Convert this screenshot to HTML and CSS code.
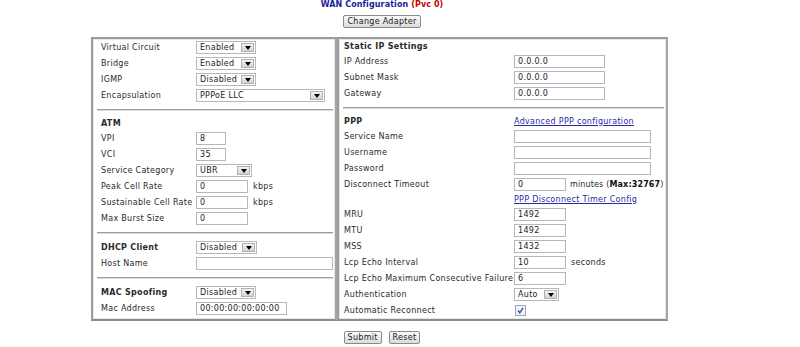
FILE: index.html
```html
<!DOCTYPE html>
<html lang="en">
<head>
  <meta charset="UTF-8" />
  <title>WAN Configuration</title>
  <link rel="stylesheet" href="styles.css">
</head>
<body>
  <div class="wrap">
    <div class="title">WAN Configuration <span class="pvc">(Pvc 0)</span></div>
    <div class="top-btn"><button class="btn">Change Adapter</button></div>

    <div class="panels">
      <div class="panel left">
        <div class="row"><span class="lbl">Virtual Circuit</span><span class="sel"><select class="w60"><option>Enabled</option></select></span></div>
        <div class="row"><span class="lbl">Bridge</span><span class="sel"><select class="w60"><option>Enabled</option></select></span></div>
        <div class="row"><span class="lbl">IGMP</span><span class="sel"><select class="w60"><option>Disabled</option></select></span></div>
        <div class="row"><span class="lbl">Encapsulation</span><span class="sel"><select class="w129"><option>PPPoE LLC</option></select></span></div>
        <hr>
        <div class="row head"><span class="lbl">ATM</span></div>
        <div class="row"><span class="lbl">VPI</span><input class="txt w30" value="8"></div>
        <div class="row"><span class="lbl">VCI</span><input class="txt w30" value="35"></div>
        <div class="row"><span class="lbl">Service Category</span><span class="sel"><select class="w56"><option>UBR</option></select></span></div>
        <div class="row"><span class="lbl">Peak Cell Rate</span><input class="txt w52" value="0"><span class="unit">kbps</span></div>
        <div class="row"><span class="lbl">Sustainable Cell Rate</span><input class="txt w52" value="0"><span class="unit">kbps</span></div>
        <div class="row"><span class="lbl">Max Burst Size</span><input class="txt w52" value="0"></div>
        <hr>
        <div class="row"><span class="lbl bold">DHCP Client</span><span class="sel"><select class="w61"><option>Disabled</option></select></span></div>
        <div class="row"><span class="lbl">Host Name</span><input class="txt w137" value=""></div>
        <hr>
        <div class="row"><span class="lbl bold">MAC Spoofing</span><span class="sel"><select class="w60"><option>Disabled</option></select></span></div>
        <div class="row"><span class="lbl">Mac Address</span><input class="txt w91" value="00:00:00:00:00:00"></div>
      </div>

      <div class="panel right">
        <div class="row head"><span class="lbl">Static IP Settings</span></div>
        <div class="row"><span class="lbl">IP Address</span><input class="txt w91" value="0.0.0.0"></div>
        <div class="row"><span class="lbl">Subnet Mask</span><input class="txt w91" value="0.0.0.0"></div>
        <div class="row"><span class="lbl">Gateway</span><input class="txt w91" value="0.0.0.0"></div>
        <hr>
        <div class="row short"><span class="lbl bold">PPP</span><a href="#">Advanced PPP configuration</a></div>
        <div class="row"><span class="lbl">Service Name</span><input class="txt w137" value=""></div>
        <div class="row"><span class="lbl">Username</span><input class="txt w137" value=""></div>
        <div class="row"><span class="lbl">Password</span><input class="txt w137" type="password" value=""></div>
        <div class="row"><span class="lbl">Disconnect Timeout</span><input class="txt w52" value="0"><span class="unit tight">minutes (<b>Max:32767</b>)</span></div>
        <div class="row short"><span class="lbl"></span><a href="#">PPP Disconnect Timer Config</a></div>
        <div class="row"><span class="lbl">MRU</span><input class="txt w52" value="1492"></div>
        <div class="row"><span class="lbl">MTU</span><input class="txt w52" value="1492"></div>
        <div class="row"><span class="lbl">MSS</span><input class="txt w52" value="1432"></div>
        <div class="row"><span class="lbl">Lcp Echo Interval</span><input class="txt w52" value="10"><span class="unit">seconds</span></div>
        <div class="row"><span class="lbl">Lcp Echo Maximum Consecutive Failure</span><input class="txt w52" value="6"></div>
        <div class="row"><span class="lbl">Authentication</span><span class="sel"><select class="w45"><option>Auto</option></select></span></div>
        <div class="row"><span class="lbl">Automatic Reconnect</span><input class="chk" type="checkbox" checked></div>
      </div>
    </div>

    <div class="bottom-btns">
      <button class="btn">Submit</button>
      <button class="btn">Reset</button>
    </div>
  </div>
</body>
</html>
```

FILE: styles.css
```css
* {
  margin: 0;
  padding: 0;
}

body {
  background: #fff;
  color: #2a2a2a;
  font-family: "DejaVu Sans", Verdana, sans-serif;
  font-size: 8px;
  letter-spacing: 0.3px;
}

.wrap {
  width: 582px;
  margin-left: 91px;
}

.title {
  height: 10px;
  line-height: 10px;
  text-align: center;
  font-weight: bold;
  color: #1c1c9c;
  letter-spacing: 0.1px;
}

.pvc {
  color: #cc0000;
}

.top-btn {
  margin: 5px 0 9px;
  text-align: center;
  height: 13px;
}

.btn {
  height: 13px;
  padding: 0 3px;
  font-family: inherit;
  font-size: 8px;
  letter-spacing: inherit;
  color: #222;
  border: 1px solid #8a8a8a;
  border-radius: 2px;
  background: linear-gradient(#fafafa, #dcdcdc);
  vertical-align: top;
}

.panels {
  display: flex;
  width: 576px;
}

.panel {
  border: 2px solid;
  border-color: #9c9c9c #a6a6a6 #8c8c8c #9c9c9c;
  box-shadow: inset 0 0 0 1px #e6e6e6;
}

.left {
  width: 248px;
  box-sizing: border-box;
  padding: 0 2px 2px 8px;
}

.right {
  flex: 1;
  padding: 0 2px 1px 5px;
}

.row {
  display: flex;
  align-items: center;
  height: 16px;
  white-space: nowrap;
}

.row.head {
  height: 14px;
  font-weight: bold;
}

.row.short {
  height: 14px;
}

.lbl {
  width: 95px;
  flex: none;
}

.right .lbl {
  width: 170px;
}

.bold {
  font-weight: bold;
}

hr {
  border: 0;
  height: 0;
  border-top: 1px solid #9a9a9a;
  border-bottom: 1px solid #dcdcdc;
  margin: 6px 0 5px;
}

.left hr {
  margin-left: -4px;
}

.right hr {
  margin-left: -1px;
}

.txt {
  height: 13px;
  box-sizing: border-box;
  border: 1px solid #b4b8bc;
  padding: 0 3px;
  font-family: inherit;
  font-size: 8px;
  letter-spacing: inherit;
  color: #222;
  background: #fff;
  outline: none;
}

.w30 { width: 30px; }
.w45 { width: 45px; }
.w52 { width: 52px; }
.w56 { width: 56px; }
.w60 { width: 60px; }
.w61 { width: 61px; }
.w91 { width: 91px; }
.w129 { width: 129px; }
.w137 { width: 137px; }

.unit {
  margin-left: 5px;
}

.unit.tight {
  margin-left: 4px;
  letter-spacing: 0.15px;
}

.unit b {
  color: #111;
}

.sel {
  position: relative;
  display: inline-block;
  height: 13px;
}

.sel select {
  -webkit-appearance: none;
  appearance: none;
  height: 13px;
  box-sizing: border-box;
  border: 1px solid #b4b8bc;
  border-radius: 0;
  background: #fff;
  padding: 0 0 0 3px;
  font-family: inherit;
  font-size: 8px;
  letter-spacing: inherit;
  color: #222;
  outline: none;
  display: block;
}

/* arrow button drawn over the select */
.sel::after {
  content: "";
  position: absolute;
  top: 2px;
  right: 2px;
  width: 13px;
  height: 9px;
  box-sizing: border-box;
  border: 1px solid #b0b0b0;
  background: linear-gradient(#f2f2f2, #d4d4d4);
}

.sel::before {
  content: "";
  position: absolute;
  z-index: 1;
  top: 5px;
  right: 5px;
  border-left: 3.5px solid transparent;
  border-right: 3.5px solid transparent;
  border-top: 4px solid #000;
}

a {
  color: #2a2aa8;
  text-decoration: underline;
}

.chk {
  -webkit-appearance: none;
  appearance: none;
  width: 11px;
  height: 11px;
  border: 1px solid #a0a8b0;
  background: #f2f4f8 url("data:image/svg+xml;utf8,<svg xmlns='http://www.w3.org/2000/svg' width='9' height='9'><path d='M2 4.5 L3.8 6.8 L7 1.8' fill='none' stroke='%233050b0' stroke-width='1.4'/></svg>") no-repeat center;
  margin-left: 1px;
}

.bottom-btns {
  margin-top: 10px;
  text-align: center;
}

.bottom-btns .btn {
  margin: 0 2px;
}
```
